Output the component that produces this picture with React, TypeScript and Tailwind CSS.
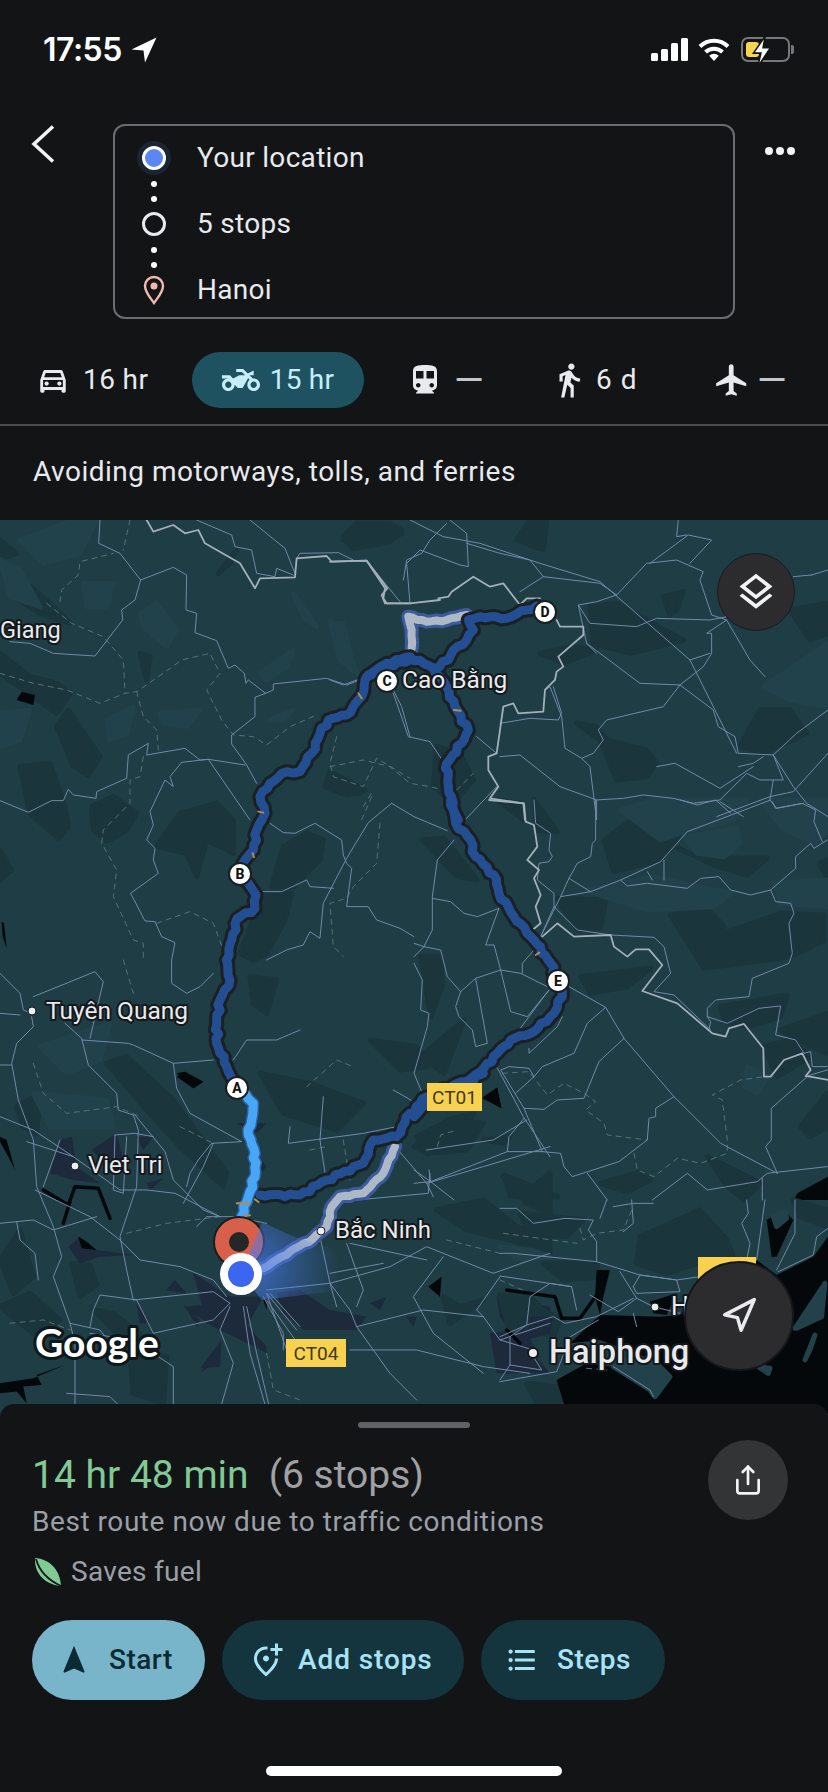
import { Navigation, Share } from "lucide-react";
import {
  MdDirectionsTransit,
  MdDirectionsWalk,
  MdFlight,
  MdFormatListBulleted,
  MdNavigation,
  MdOutlineAddLocationAlt,
  MdOutlineDirectionsCar,
  MdOutlineLayers,
  MdOutlineTwoWheeler,
} from "react-icons/md";

// traced pieces of the map; every layer is in the px of a 3x crop starting at `at`
interface MapLayer {
  at: [number, number];
  light?: string[];
  dark?: string[];
  navy?: string[];
  black?: string[];
  rivers?: string[];
  roads?: string[];
  dashes?: string[];
  borders?: string[];
}

const layers: MapLayer[] = [
  {
    at: [0, 520],
    light: [
      "60,60 220,0 290,0 240,100 130,130",
      "250,190 340,190 320,260 260,260",
      "420,280 470,250 530,330 500,380 430,320",
      "780,460 880,390 860,440 800,480",
      "880,220 950,320 910,290",
      "990,310 1030,310 1060,440 1010,380",
      "0,580 90,570 60,660 0,680",
      "320,600 400,560 380,640 330,660",
      "480,580 600,570 560,620 490,610",
      "810,600 880,570 850,600",
      "0,120 60,150 120,260 30,230",
    ],
    dark: [
      "170,620 205,570 300,710 265,765 220,740",
      "60,740 150,730 195,860 205,920 175,955 90,880",
      "275,860 340,830 410,880 380,930 320,965 280,930",
      "815,1100 850,980 920,940 970,960 960,1020 880,1100",
      "720,1300 790,1120 875,1120 855,1200 800,1300 760,1320",
      "975,800 990,755 1095,810 1040,825",
      "1030,60 1060,25 1160,10 1205,30 1170,65 1080,80",
      "470,980 540,880 650,850 700,900 700,1000 620,960 590,1070 560,1000",
      "30,170 80,190 150,250 210,310 120,280 40,230",
      "0,60 50,100 20,110 0,100",
      "0,400 90,470 170,490 210,520 170,580 100,530 0,460",
      "655,160 710,90 690,130",
      "420,400 450,410 440,480",
      "0,990 35,1050 0,1080",
    ],
    black: ["50,540 65,515 105,525 100,555", "5,1205 12,1210 20,1285 8,1250"],
    roads: [
      "300,0 296,70 360,100 422,180 520,142 560,165 558,270 590,280 585,338 650,362 685,445 705,435 733,460 738,490 745,480 797,520 820,510 820,492 980,475 1040,495 1080,480",
      "422,180 405,240 365,270 368,300 285,408 160,400 90,370 30,365",
      "797,520 765,532 765,590 695,645 695,672 740,735 770,790",
      "0,842 85,877 155,842 190,842 205,808 220,825 288,835 290,815 380,775 385,705 445,670 440,705 555,685 600,720 625,718 735,735",
      "625,718 545,727 510,770 520,800 495,780 450,875 460,915 440,960 465,985 460,1020 475,1060 392,1120 435,1203 465,1205 485,1250 525,1268 515,1320",
      "625,718 750,900",
      "810,910 850,938 885,940 945,910 1025,960 1030,1005 1040,1030 1055,1045 1040,1160 1105,1160 1130,1200 1200,1225 1242,1250",
      "1175,850 1105,908 1040,1015 970,1150 960,1255 930,1235 910,1275 860,1290 800,1320",
      "790,1115 845,1115 920,1080 930,1100 1000,1105",
      "1180,510 1205,560 1230,650",
      "1175,850 1242,890",
      "590,0 695,45 705,80 755,90 770,160 825,170 830,145 880,165",
      "750,0 855,85 885,160",
      "890,115 900,100 1015,98 1060,120",
      "1100,122 1200,245",
    ],
    dashes: [
      "180,245 185,210 235,165 240,125 340,100",
      "390,0 370,90",
      "0,460 100,490 200,510 300,550 375,520 410,515 490,460 545,420 630,400 660,460 620,510 665,600 700,645 760,650 800,675 870,620 950,585",
      "140,250 215,310 310,350 370,420 375,520",
      "410,515 430,590 470,630 475,690",
      "430,710 420,770 390,780 390,850 310,930 305,970 350,1050 340,1130 400,1260 430,1270 430,1320",
      "470,1210 570,1175 640,1210 670,1290",
      "1010,650 990,730 1000,770 1090,800 1130,715 1230,775",
      "1115,830 1085,900",
      "1140,910 1130,1030 1060,1100 1040,1135 990,1150 1000,1280 1030,1310",
    ],
    borders: [
      "440,0 460,35 520,15 555,40 595,30 615,70 720,130 765,205 780,175 885,172 890,115 980,108 995,125 1100,122 1162,205 1145,225 1155,250 1232,250",
    ],
  },
  {
    at: [330, 520],
    light: ["0,300 40,340 80,460 30,420", "1300,500 1494,370 1494,560 1380,540"],
    dark: [
      "40,50 80,10 180,10 215,40 160,70 70,85",
      "560,60 600,0 650,0 640,90",
      "630,400 720,380 800,390 700,430",
      "740,610 800,620 830,660 950,690 980,730 950,770 860,780 810,660",
      "780,260 860,250 1060,360 900,400 790,370",
      "1000,230 1060,215 1040,270 1020,285",
      "1230,680 1290,570 1380,570 1430,640 1300,700",
      "1380,270 1494,250 1494,340 1440,360",
      "320,680 390,700 430,780 370,850 310,800",
      "0,770 60,790 90,820 30,820",
      "950,870 1000,840 1050,900 950,900",
    ],
    roads: [
      "240,0 340,50 450,70 630,130 810,185 1080,420 1220,700",
      "360,0 410,40 415,140 390,135 270,90 230,130 240,250",
      "350,10 300,60 275,100 230,120 220,180",
      "410,70 510,100 600,120 640,170 570,215",
      "640,170 810,190 860,225 950,130 1040,120 1120,155 1110,180 1145,285 1190,300 1260,420 1305,470",
      "960,130 1075,45 1145,60 1080,130",
      "1045,0 1040,50 1070,45",
      "860,225 800,245 745,255 780,310 920,320 980,295 1140,300 1190,290",
      "745,255 760,325 770,370 930,490 1050,495 1120,440 1145,400 1145,340 1130,340 1190,300",
      "770,370 800,400",
      "1050,495 1000,560 830,600 805,630 820,660 790,700 755,715 705,685 695,590 660,500 645,510",
      "1050,495 1150,570 1165,620 1215,650 1225,700 1330,705 1390,800 1430,850 1494,890",
      "1080,420 1140,400",
      "1300,710 1270,730 1225,740",
      "1330,705 1360,780 1290,780 1250,760 1170,840 1090,850 1030,835 940,825 880,835 800,840 690,800 570,705 510,710",
      "1494,570 1400,640 1330,705",
      "1494,700 1390,815 1320,830 1160,890",
      "800,840 800,900 780,740 755,715",
      "980,740 1035,730 1170,805 1270,740",
      "1170,845 1240,890",
      "1330,780 1320,840 1340,865 1420,850",
      "670,500 695,580 685,600 600,595 510,610",
      "1445,165 1494,150",
      "1390,170 1445,165",
      "440,650 500,700",
      "190,520 235,650 300,665 340,725",
      "0,480 40,495 80,480",
      "405,900 500,800",
    ],
    dashes: [
      "0,740 100,720 180,740 240,790 300,800 340,810",
      "100,860 130,810",
      "380,810 430,760",
    ],
    borders: [
      "0,125 110,122 165,205 160,235 170,250 240,250 330,240 325,235 355,230 365,215 430,170 480,200 520,190 570,255 590,235 630,235",
      "680,300 690,320 760,320 760,345 685,410 700,440 680,455 675,480 645,510 640,575 565,580 550,550 520,560 500,700 475,710 475,750 505,800 480,835 580,850 585,900",
    ],
  },
  {
    at: [414, 800],
    light: [
      "620,30 720,0 1000,0 960,60 810,95 740,120",
      "810,110 970,85 980,130 930,170 850,160",
      "1040,0 1242,0 1242,90 1200,130 1100,80",
      "520,270 720,230 950,280 900,320 700,330 570,290",
      "1080,250 1240,240 1240,320 1100,310",
      "1000,800 1060,830 1030,880 990,860",
    ],
    dark: [
      "570,120 720,10 800,70 800,100 740,180 600,215",
      "770,345 880,325 930,380 900,410 1100,340 1230,345 1230,420 1130,470 870,505",
      "500,530 710,505 640,560 530,580",
      "760,130 860,175 1060,175 1000,225 900,195",
      "430,295 575,300 560,385 490,390",
      "920,620 1120,585 1100,650 1000,680 930,665",
      "1050,740 1130,720 1190,770 1090,830",
      "25,120 90,115 190,240 130,230",
      "20,470 80,470 85,560 50,650",
      "20,770 150,660 90,820",
      "0,1040 100,960 180,940 110,1040 40,1060",
      "270,1125 430,1190 290,1190",
      "880,1070 1040,1150 990,1200 940,1160",
      "560,1150 680,1115 710,1140 640,1175",
      "1215,190 1242,180 1242,240",
      "1100,690 1242,640 1242,760 1190,740",
      "1160,980 1240,880 1242,980 1190,1010",
      "360,0 430,95 370,90",
      "250,0 320,10 330,60",
    ],
    navy: ["205,1020 280,1005 255,1035"],
    black: ["205,895 250,862 262,925", "1140,1200 1150,1180 1242,1130 1242,1200"],
    roads: [
      "0,50 100,92",
      "120,120 70,180 55,290 55,390 30,440 80,450 100,530 140,575 185,535 260,510 320,520 400,560",
      "55,295 110,305 150,340 190,350 255,325 215,435 240,435 260,510 290,635 340,650 405,570",
      "185,535 220,730 185,740 175,690 135,650 125,620 140,575",
      "315,690 405,570",
      "465,560 575,622 630,715 780,890 920,1030 1090,1120",
      "575,622 520,670 480,760 385,800 360,830 305,880",
      "630,715 555,785 510,895 430,900 390,928 330,925 260,810 285,800 345,805 360,830",
      "330,925 385,1055 280,1055 50,1145 0,1110",
      "385,1055 440,1060 450,1100 475,1130 615,1085 700,1020 705,955 725,950 725,925 780,890",
      "330,955 285,1010 280,1055",
      "50,1145 0,1150",
      "45,1110 50,1145 120,1200",
      "520,1120 580,1200",
      "715,1200 820,1120 880,1170 1030,1145 1060,1120 1240,1100",
      "1090,1120 1055,1040 1072,1020 1072,925 1180,830",
      "1045,1200 1045,1135",
      "0,430 30,440 0,470",
      "0,490 25,540 20,630 45,640 40,680 0,820 25,880",
      "380,410 440,290 465,235 490,190 530,170 535,130 545,120 545,0",
      "440,290 530,275 620,240 740,185 820,95 1070,0",
      "465,235 530,275",
      "360,0 365,70 410,100 405,150 415,170 405,185 375,190 370,240 420,280 420,320 490,390 590,405",
      "420,320 380,410",
      "620,240 640,258 700,250 820,265 860,235 915,230 950,270 1010,285 1070,270 1145,205 1145,170 1190,130 1200,145 1240,120",
      "700,215 715,240",
      "750,180 750,240",
      "1070,270 1085,305 1130,310 1140,340 1125,370 1135,460 1125,490 1015,535 1005,590 905,600 880,625 880,650 890,665 885,690",
      "880,650 940,670 1035,625 1100,618 1085,705 1145,720 1170,760 1190,755 1195,800 1240,800",
      "590,405 720,412 750,440 770,520 720,575 780,585 890,690",
      "1075,5 1085,25 1165,10 1205,30 1200,65 1225,125",
      "800,0 850,15 905,0 950,40",
      "1180,828 1240,810",
      "325,520 325,490 360,450",
      "345,745 345,760 430,680 445,650",
    ],
    dashes: [
      "265,820 345,815 400,885 450,850 510,880 545,905 515,930 570,970 580,1005 700,1020",
      "660,1060 670,1110 720,1130 790,1075 860,1090 940,1060 940,1020 925,900 895,885 980,840 1050,830",
      "70,1040 80,1005 130,990",
    ],
    borders: [
      "225,0 330,10 335,65 360,75 370,140 340,180 375,210 360,235 380,285 365,320 380,370 358,388",
      "385,410 430,370 480,410 590,405 600,440 640,470 665,448 705,448 745,495 685,573 790,610 895,700 935,710 945,685 990,672 1048,745 1050,830 1070,830 1110,780 1165,760 1190,810 1175,828 1242,840",
    ],
  },
  {
    at: [0, 960],
    light: ["120,260 330,190 300,300 200,340", "100,400 320,420 340,500 150,500"],
    dark: [
      "320,310 380,290 520,420 680,640 670,680 540,560 440,450",
      "215,910 270,915 290,975 240,1010",
      "0,1040 90,1000 180,1080 100,1120",
      "390,1180 500,1190 490,1330 400,1300",
      "280,1050 340,1060 430,1130 350,1120",
      "750,50 830,60 800,160 760,130",
      "0,900 60,810 100,950 40,1000",
      "50,440 120,400 110,520 70,500",
    ],
    navy: [
      "150,640 180,540 215,530 230,620 300,670 220,660",
      "275,570 350,520 370,600 310,610",
      "410,530 460,530 430,570",
      "205,860 240,830 290,870 400,885 300,890 240,910",
      "440,670 490,655 450,690",
      "710,490 800,490 770,520",
      "770,580 800,620 780,640",
      "410,1030 450,1090 420,1090",
      "500,990 525,960 560,1000",
      "550,1030 600,1080 590,1100",
      "600,1240 650,1170 640,1210",
      "580,940 680,1010 790,1010 740,1100 800,1170 800,1180 680,1100 620,1090",
    ],
    black: [
      "530,340 555,335 610,365 580,385",
      "0,1270 100,1255 200,1213 110,1245 125,1275 70,1280 80,1330 50,1295 0,1300",
      "0,530 20,540 45,630 25,590 0,545",
      "235,830 260,845 290,870 245,865",
    ],
    rivers: ["130,690 205,735 225,680 295,685 330,775", "210,725 190,790"],
    roads: [
      "0,40 60,100 70,150 95,160",
      "100,110 285,35 310,65 270,235",
      "195,190 245,235 265,315 350,400 355,450 400,465 415,510 410,680 360,830 380,930 400,1020",
      "245,240 385,250 400,255 520,310 530,385 570,460 725,545",
      "520,310 640,300",
      "95,170 100,200 50,250 35,310 55,420 100,540 110,680 160,800 185,890 160,950 210,1090 225,1150 225,1350",
      "0,160 60,165",
      "0,315 35,315",
      "0,470 100,510 220,590 360,690 440,690 525,700 660,770",
      "80,545 220,590",
      "180,540 130,680",
      "105,690 270,770 360,840 420,900 540,920 640,960 680,1010",
      "345,525 340,690 370,700 380,530",
      "345,525 405,520 460,530",
      "405,465 495,575 520,660 610,750 660,770",
      "595,600 635,550 725,545",
      "560,680 570,640 595,600",
      "0,790 50,785 100,780 160,810 290,770",
      "50,785 60,840 105,880 115,960",
      "400,1020 640,995 690,1030",
      "690,1030 640,1080 460,1120 410,1020 300,1005 280,1050 270,1100",
      "730,1040 750,1180 800,1350",
      "740,1040 770,1180 810,1350",
      "690,1040 660,1110 700,1210 660,1350",
      "210,1090 300,1110 330,1150 430,1160 520,1220 520,1350",
      "270,1120 330,1130",
      "200,1300 330,1310 370,1350",
      "515,0 515,70 560,100 600,80 640,40",
      "700,300 740,240 830,240 900,210",
      "590,800 620,770 700,770 800,790",
      "550,730 610,620 640,550",
      "790,1010 850,1120 850,1170",
      "800,1020 900,1160",
      "810,1000 900,1100",
    ],
    dashes: [
      "100,310 130,400 200,460 350,440 420,470",
      "380,820 500,790 660,770",
      "30,1090 130,1080 210,1110",
      "370,0 400,100",
      "540,500 640,550",
      "800,1180 820,1290 900,1320",
    ],
  },
  {
    at: [150, 1040],
    dark: [
      "860,510 1000,480 1100,560 1200,590 1200,640 1080,600 950,570",
      "1060,410 1150,440 1200,400 1200,520 1130,490",
      "800,290 900,240 1000,250 950,330 830,340",
      "660,0 800,20 830,80 750,90",
      "330,100 480,130 640,190 560,270 400,220",
      "1000,300 1080,290 1060,310",
      "880,770 930,800 1000,780 900,850",
    ],
    navy: [
      "130,700 240,770 210,800 170,770",
      "100,800 230,790 350,920 345,935 190,860",
      "380,760 450,750 540,810 650,830 620,870 460,870 400,820",
      "230,770 340,770 310,800 260,805",
      "50,750 75,725 105,760",
      "150,985 215,900 210,980",
      "660,790 710,770 690,810",
      "1040,770 1200,800 1200,850 1100,900 1050,830",
      "1020,880 1090,870 1200,1000 1040,1000",
      "770,830 800,830 790,860",
    ],
    black: [
      "1000,170 1040,145 1055,205",
      "835,740 875,710 870,770",
      "80,110 100,95 160,125 130,145",
      "340,780 350,775 350,810",
    ],
    roads: [
      "350,750 540,730 720,680 830,620 1030,700 1200,640",
      "540,730 600,810 620,860 740,830 820,810 1000,830 1050,900 1150,930",
      "840,400 835,460 620,480 545,490",
      "510,590 540,730 560,800",
      "830,430 1000,380 1200,320",
      "350,760 410,930",
      "350,760 440,870",
      "600,930 800,930 1000,980 1140,1000",
      "1050,710 980,810 1000,830",
      "1050,900 1200,850",
      "620,860 720,1000 800,1080",
      "880,650 790,770 850,880 1000,1000",
      "740,325 830,430 850,470",
      "420,260 415,310 640,280 740,260",
      "520,170 510,300 530,430",
      "730,150 800,190 1000,120",
      "1040,80 1120,230 1200,350",
      "1130,240 1030,300 830,330",
      "600,610 830,660",
      "700,670 540,700",
      "590,610 640,750 620,800",
    ],
    dashes: [
      "470,140 560,60 610,80",
      "480,330 530,320",
      "1050,720 1140,760 1200,770",
      "580,300 600,420",
      "890,600 1050,640",
    ],
  },
  {
    at: [500, 1200],
    dark: [
      "420,110 600,30 680,120 700,170 590,190 500,220 410,190",
      "0,285 90,290 130,330 180,360 160,410 80,380 30,400",
      "60,40 250,60 200,110 90,100",
      "130,190 290,190 300,230 190,240",
      "880,0 984,30 984,80 900,50",
      "80,550 170,560 180,610 110,610",
    ],
    navy: ["90,350 160,350 150,400 80,420", "10,420 70,380 120,470 60,500"],
    black: [
      "300,345 480,350 540,345 560,320 600,225 770,180 830,225 940,170 984,110 984,640 200,640 170,540 260,490 340,500 450,570 465,590 510,530 460,480 300,420 210,430",
      "290,210 330,210 310,290 300,345 285,290",
      "450,305 530,280 500,345 460,340",
      "800,60 850,30 880,60 830,170 815,170",
    ],
    light: [
      "340,500 450,570 465,590 510,530 470,490 400,470",
      "885,385 975,250 965,350 890,385",
      "915,480 945,405 930,450",
      "775,500 810,505 805,520",
      "820,50 855,35 860,55 830,80",
      "0,140 90,150 150,170 60,180",
    ],
    rivers: ["20,270 165,290 185,355 240,355 290,285", "20,390 60,430"],
    roads: [
      "0,25 50,25 100,70 195,55 280,60 265,90 290,125 290,185 420,225 530,240 600,230",
      "0,160 40,160 290,185",
      "0,228 215,260 230,330",
      "270,285 355,335 410,295 360,215",
      "400,260 420,225 530,240 540,275 410,280 400,260",
      "410,295 460,320 540,340",
      "0,410 80,375 160,350 195,370 290,350 400,295",
      "195,420 295,360",
      "0,540 30,495 30,410 80,375 90,290 150,250 215,260",
      "30,495 125,510 100,470",
      "0,545 170,515 200,440",
      "740,0 745,40 725,70 750,130 740,180",
      "795,0 770,180",
      "885,0 885,100 830,210",
      "835,215 940,165 950,110 984,85",
      "320,0 300,55",
      "395,0 400,70 370,95",
      "340,20 400,10 460,10",
      "340,500 450,570 460,590",
      "400,340 410,380",
    ],
    dashes: [
      "10,100 230,130",
      "240,85 250,120 290,100 370,90 400,20",
      "260,505 320,510",
    ],
  },
];

// route, in the same crop coordinates
const darkRoute: [number, number, string][] = [
  [150, 1040, "330,465 450,465 530,420 640,370 670,300 740,290 780,220 830,170 1000,100"],
  [0, 960, "710,383 680,320 650,250 650,180 660,120 690,60 680,0"],
  [0, 520, "680,1320 695,1260 712,1195 765,1165 768,1125 745,1090 720,1065 735,1020 760,990 770,930 795,880 780,830 810,790 860,755 900,755 935,700 960,640 985,600 1040,585 1085,530 1095,480 1105,465 1160,450 1165,440 1230,420"],
  [330, 520, "110,470 170,430 240,410 310,445 355,420 370,390 410,360 430,330 415,300 450,290 530,295 590,270 620,258"],
  [330, 520, "310,445 350,500 375,560 415,630 395,670 350,730 355,800 375,880 385,900"],
  [414, 800, "110,0 125,70 170,120 185,170 240,225 255,280 300,350 360,420 410,490 432,545 445,590 420,640 360,695 290,720 250,760 200,815 150,860 60,890 0,950"],
];

const grayRoute: [number, number, string][] = [
  [150, 1040, "340,685 420,635 490,595 530,560 545,500 570,470 640,460 700,400 735,320"],
  [330, 520, "245,385 245,330 235,290 290,305 350,300 410,285"],
];

const lightRoute = "285,160 310,190 305,240 295,285 315,340 315,410 295,470 275,530";

// the little traffic flecks sitting on the route
const flecks: [number, number, string][] = [
  [0, 520, "1075,520 1085,535"],
  [0, 520, "775,875 790,878"],
  [0, 520, "758,1000 762,1012"],
  [330, 520, "372,570 392,572"],
  [414, 800, "365,465 376,458"],
  [150, 1040, "315,478 326,486"],
  [150, 1040, "280,528 300,526"],
  [150, 1040, "260,490 300,490"],
];

// real route geometry is jagged; break long runs up so the line doesn't look ruled
function roughen(pts: string, amount: number) {
  const nums = pts.split(" ").map((p) => p.split(",").map(Number));
  const out: string[] = [];
  let n = 0;
  nums.forEach(([x, y], i) => {
    out.push(`${x},${y}`);
    const next = nums[i + 1];
    if (!next) return;
    const dx = next[0] - x;
    const dy = next[1] - y;
    const len = Math.hypot(dx, dy);
    const steps = Math.floor(len / 14);
    for (let s = 1; s < steps; s++) {
      n += 1;
      const off = Math.sin(n * 2.3) * Math.cos(n * 0.7) * amount;
      const t = s / steps;
      out.push(`${(x + dx * t - (dy / len) * off).toFixed(1)},${(y + dy * t + (dx / len) * off).toFixed(1)}`);
    }
  });
  return out.join(" ");
}

function Trace({
  at,
  pts,
  stroke,
  width,
  dash,
}: {
  at: [number, number];
  pts: string;
  stroke: string;
  width: number;
  dash?: string;
}) {
  return (
    <polyline
      transform={`translate(${at[0]} ${at[1]}) scale(0.3333)`}
      points={pts}
      fill="none"
      stroke={stroke}
      strokeWidth={width}
      strokeDasharray={dash}
      strokeLinejoin="round"
      strokeLinecap="round"
      vectorEffect="non-scaling-stroke"
    />
  );
}

function Patches({
  at,
  list,
  fill,
  soft,
}: {
  at: [number, number];
  list?: string[];
  fill: string;
  soft?: boolean;
}) {
  return (
    <>
      {list?.map((p) => (
        <polygon
          key={p}
          transform={`translate(${at[0]} ${at[1]}) scale(0.3333)`}
          points={p}
          fill={fill}
          stroke={soft ? fill : "none"}
          strokeWidth={soft ? 5 : 0}
          strokeLinejoin="round"
          vectorEffect="non-scaling-stroke"
        />
      ))}
    </>
  );
}

function Place({
  x,
  y,
  size,
  children,
  weight = 400,
}: {
  x: number;
  y: number;
  size: number;
  children: string;
  weight?: number;
}) {
  return (
    <text
      x={x}
      y={y}
      fontSize={size}
      fontWeight={weight}
      fill="#e8eaed"
      stroke="#14181a"
      strokeWidth={4}
      strokeLinejoin="round"
      className="font-['Roboto',sans-serif] [paint-order:stroke]"
    >
      {children}
    </text>
  );
}

function Stop({ x, y, label }: { x: number; y: number; label: string }) {
  return (
    <g>
      <circle cx={x} cy={y} r={11} fill="#fff" stroke="#1b1f21" strokeWidth={2} />
      <text
        x={x}
        y={y + 5}
        fontSize={14}
        fontWeight={800}
        textAnchor="middle"
        fill="#111"
        className="font-['Roboto',sans-serif]"
      >
        {label}
      </text>
    </g>
  );
}

function Shield({ x, y, w, label }: { x: number; y: number; w: number; label: string }) {
  return (
    <g>
      <rect x={x} y={y} width={w} height={28} fill="#f8d24f" />
      <text
        x={x + w / 2}
        y={y + 21}
        fontSize={19}
        textAnchor="middle"
        fill="#3d3a28"
        className="font-['Roboto',sans-serif]"
      >
        {label}
      </text>
    </g>
  );
}

function MapArt() {
  return (
    <svg viewBox="0 520 828 896" className="block h-[896px] w-[828px]">
      <defs>
        <radialGradient id="beam" gradientUnits="userSpaceOnUse" cx="250" cy="1268" r="90">
          <stop offset="0%" stopColor="#4a7bf0" stopOpacity="0.7" />
          <stop offset="100%" stopColor="#4a7bf0" stopOpacity="0" />
        </radialGradient>
      </defs>
      <rect x="0" y="520" width="828" height="896" fill="#1e3d44" />
      {layers.map((l, i) => (
        <g key={`a${i}`}>
          <Patches at={l.at} list={l.dark} fill="#1a353c" soft />
          <Patches at={l.at} list={l.navy} fill="#1c2a3c" />
          <Patches at={l.at} list={l.black} fill="#05080a" />
          <Patches at={l.at} list={l.light} fill="#21424a" soft />
        </g>
      ))}
      {layers.map((l, i) => (
        <g key={`b${i}`}>
          {l.rivers?.map((p) => (
            <Trace key={p} at={l.at} pts={p} stroke="#05080a" width={3.5} />
          ))}
          {l.dashes?.map((p) => (
            <Trace key={p} at={l.at} pts={p} stroke="#55727b" width={1} dash="5 5" />
          ))}
          {l.roads?.map((p) => (
            <Trace key={p} at={l.at} pts={p} stroke="#7488a8" width={1} />
          ))}
          {l.borders?.map((p) => (
            <Trace key={p} at={l.at} pts={p} stroke="#a3afba" width={1.8} />
          ))}
        </g>
      ))}

      {grayRoute.map(([x, y, p]) => (
        <Trace key={p} at={[x, y]} pts={roughen(p, 3)} stroke="#3c5a9c" width={14} />
      ))}
      {grayRoute.map(([x, y, p]) => (
        <Trace key={p} at={[x, y]} pts={roughen(p, 3)} stroke="#aeb9c8" width={8} />
      ))}
      {darkRoute.map(([x, y, p]) => (
        <Trace key={p} at={[x, y]} pts={roughen(p, 6)} stroke="#1b2023" width={15} />
      ))}
      {darkRoute.map(([x, y, p]) => (
        <Trace key={p} at={[x, y]} pts={roughen(p, 6)} stroke="#234e92" width={9} />
      ))}
      <Trace at={[150, 1040]} pts={roughen(lightRoute, 5)} stroke="#2a5f9a" width={12} />
      <Trace at={[150, 1040]} pts={roughen(lightRoute, 5)} stroke="#48a6f7" width={9} />
      {flecks.map(([x, y, p]) => (
        <Trace key={p} at={[x, y]} pts={p} stroke="#b58c4e" width={2} />
      ))}

      <Stop x={237} y={1088} label="A" />
      <Stop x={240} y={874} label="B" />
      <Stop x={387} y={681} label="C" />
      <Stop x={545} y={612} label="D" />
      <Stop x={558} y={981} label="E" />

      <Shield x={427} y={1083} w={55} label="CT01" />
      <Shield x={286} y={1339} w={60} label="CT04" />
      <Shield x={698} y={1257} w={58} label="" />

      <Place x={0} y={638} size={23.500}>Giang</Place>
      <Place x={402} y={688} size={24.500}>Cao Bằng</Place>
      <Place x={46} y={1019} size={24.500}>Tuyên Quang</Place>
      <Place x={88} y={1173} size={24}>Viet Tri</Place>
      <Place x={335} y={1238} size={24}>Bắc Ninh</Place>
      <Place x={549} y={1363} size={32.500} weight={500}>Haiphong</Place>
      <Place x={671} y={1315} size={25}>H</Place>
      <circle cx={32} cy={1011} r={4} fill="#eee" stroke="#14181a" />
      <circle cx={75} cy={1166} r={4} fill="#eee" stroke="#14181a" />
      <circle cx={321} cy={1231} r={4} fill="#eee" stroke="#14181a" />
      <circle cx={533} cy={1353} r={5} fill="#eee" stroke="#14181a" strokeWidth={2} />
      <circle cx={655} cy={1307} r={4} fill="#eee" stroke="#14181a" />

      <text
        x={35}
        y={1357}
        fontSize={39}
        fontWeight={700}
        fill="#fff"
        stroke="#10171a"
        strokeWidth={6}
        strokeLinejoin="round"
        className="font-['Lato',sans-serif] [paint-order:stroke]"
      >
        Google
      </text>

      <circle cx={239} cy={1242} r={25} fill="#d8604a" stroke="#1a1d1f" strokeWidth={2} />
      <circle cx={239} cy={1242} r={10} fill="#252628" />
      <path d="M241 1274 L262 1222 L290 1235 L350 1255 L345 1290 L262 1300 Z" fill="url(#beam)" />
      <circle cx={241} cy={1274} r={21} fill="#fff" />
      <circle cx={241} cy={1274} r={13} fill="#3a66f0" />
    </svg>
  );
}

function Reception() {
  return (
    <div className="flex items-center gap-[10px]">
      <div className="flex h-[23px] items-end gap-[3px]">
        <div className="h-[8px] w-[7px] rounded-[1.5px] bg-white" />
        <div className="h-[12px] w-[7px] rounded-[1.5px] bg-white" />
        <div className="h-[18px] w-[7px] rounded-[1.5px] bg-white" />
        <div className="h-[23px] w-[7px] rounded-[1.5px] bg-white" />
      </div>
      <svg width="32" height="24" viewBox="0 0 32 24" fill="none">
        <path d="M2 8.5a20 20 0 0 1 28 0" stroke="#fff" strokeWidth="4" />
        <path d="M7.5 14a12.4 12.4 0 0 1 17 0" stroke="#fff" strokeWidth="4" />
        <path d="M16 23l-4.8-5.3a7 7 0 0 1 9.6 0z" fill="#fff" />
      </svg>
      <div className="relative ml-[1px] h-[25px] w-[49px] rounded-[7px] border-2 border-[#77787b] p-[3px]">
        <div className="h-full w-[13px] rounded-[3px] bg-[#f8d54a]" />
        <svg className="absolute left-[7px] top-[-4px]" width="24" height="33" viewBox="0 0 22 31">
          <path d="M14 1 3 17h7l-3 13L19 12h-7z" fill="#fff" stroke="#131416" strokeWidth="1.5" />
        </svg>
        <div className="absolute right-[-6px] top-[6px] h-[9px] w-[3px] rounded-r-[2px] bg-[#77787b]" />
      </div>
    </div>
  );
}

function Mode({ icon, children, className }: { icon: React.ReactNode; children: React.ReactNode; className: string }) {
  return (
    <div className={`flex items-center text-[28px] text-[#e8eaed] ${className}`}>
      {icon}
      {children}
    </div>
  );
}

export default function App() {
  return (
    <div className="flex h-[1792px] w-[828px] flex-col overflow-hidden bg-[#131416] font-['Roboto',sans-serif]">
      <div className="flex h-[124px] items-start justify-between pl-[43px] pr-[38px] pt-[32px]">
        <div className="flex items-center gap-[9px] font-['Inter',sans-serif] text-[32px] font-semibold leading-[36px] tracking-[-0.5px] text-white">
          17:55
          <svg width="26" height="26" viewBox="0 0 26 26">
            <path d="M25.500 0.500 0.500 12.500l12 1 1.500 12z" fill="#fff" />
          </svg>
        </div>
        <div className="pt-[5px]">
          <Reception />
        </div>
      </div>

      <div className="flex h-[195px] items-start">
        <button className="ml-[31px] mt-[1px] w-[82px] text-left">
          <svg width="24" height="38" viewBox="0 0 24 38" fill="none">
            <path d="M22 1.500 3 19l19 17.500" stroke="#f1f3f4" strokeWidth="3.5" />
          </svg>
        </button>
        <div className="flex h-[195px] w-[622px] flex-col rounded-[12px] border-2 border-[#6b6c6f] pl-[22px] pt-[12px]">
          <div className="flex h-[40px] items-center">
            <div className="flex w-[60px] justify-start">
              <div className="flex size-[34px] items-center justify-center rounded-full bg-[#1b2433]">
                <div className="size-[24px] rounded-full border-[3px] border-white bg-[#5a87f2]" />
              </div>
            </div>
            <span className="text-[28px] tracking-[0.3px] text-[#e8eaed]">Your location</span>
          </div>
          <div className="flex h-[26px] w-[34px] flex-col items-center justify-center gap-[9px]">
            <div className="size-[6px] rounded-full bg-white" />
            <div className="size-[6px] rounded-full bg-white" />
          </div>
          <div className="flex h-[40px] items-center">
            <div className="w-[60px]">
              <div className="ml-[5px] size-[24px] rounded-full border-[3px] border-[#e8eaed]" />
            </div>
            <span className="text-[28px] tracking-[0.3px] text-[#e8eaed]">5 stops</span>
          </div>
          <div className="flex h-[26px] w-[34px] flex-col items-center justify-center gap-[9px]">
            <div className="size-[6px] rounded-full bg-white" />
            <div className="size-[6px] rounded-full bg-white" />
          </div>
          <div className="flex h-[40px] items-center">
            <div className="w-[60px]">
              <svg className="ml-[6px]" width="22" height="30" viewBox="0 0 22 30" fill="none">
                <path
                  d="M11 28C6 21 2 17 2 11a9 9 0 0 1 18 0c0 6-4 10-9 17z"
                  stroke="#f0b8ae"
                  strokeWidth="2.4"
                />
                <circle cx="11" cy="11" r="3.500" fill="#f0b8ae" />
              </svg>
            </div>
            <span className="text-[28px] tracking-[0.3px] text-[#e8eaed]">Hanoi</span>
          </div>
        </div>
        <div className="ml-[30px] mt-[23px] flex gap-[3px]">
          <div className="size-[8px] rounded-full bg-[#f1f3f4]" />
          <div className="size-[8px] rounded-full bg-[#f1f3f4]" />
          <div className="size-[8px] rounded-full bg-[#f1f3f4]" />
        </div>
      </div>

      <div className="mt-[33px] flex h-[56px] items-center">
        <Mode className="ml-[36px] w-[156px] gap-[13px]" icon={<MdOutlineDirectionsCar size={34} />}>
          <span className="tracking-[0.4px]">16 hr</span>
        </Mode>
        <div className="flex h-[56px] w-[172px] items-center justify-center gap-[10px] rounded-full bg-[#1f5260] text-[28px] tracking-[0.2px] text-[#c6eefa]">
          <MdOutlineTwoWheeler size={38} />
          <span>15 hr</span>
        </div>
        <Mode className="ml-[43px] w-[141px] gap-[11px]" icon={<MdDirectionsTransit size={36} />}>
          <span className="text-[38px] leading-none text-[#c4c6c9]">—</span>
        </Mode>
        <Mode className="ml-[2px] w-[163px] gap-[8px]" icon={<MdDirectionsWalk size={38} />}>
          <span className="tracking-[1px]">6 d</span>
        </Mode>
        <Mode className="gap-[6px]" icon={<MdFlight size={38} />}>
          <span className="text-[38px] leading-none text-[#c4c6c9]">—</span>
        </Mode>
      </div>

      <div className="mt-[16px] h-[2px] bg-[#4b4c4e]" />
      <div className="flex h-[94px] items-start pl-[33px] pt-[29px] text-[28px] leading-[34px] tracking-[0.5px] text-[#e8eaed]">
        Avoiding motorways, tolls, and ferries
      </div>

      <div className="relative h-[884px] shrink-0">
        <MapArt />
        <button className="absolute left-[717px] top-[33px] flex size-[78px] items-center justify-center rounded-full border border-[#1b1c1e] bg-[#2c2b2d] text-[#f1f3f4]">
          <MdOutlineLayers size={44} />
        </button>
        <button className="absolute left-[684px] top-[741px] flex size-[110px] items-center justify-center rounded-full border-2 border-[#15171a] bg-[#2c2b2d] text-[#e8eaed]">
          <Navigation size={38} strokeWidth={2.2} className="-rotate-[2deg]" />
        </button>
      </div>

      <div className="relative flex grow flex-col rounded-t-[14px] bg-[#131416] px-[32px]">
        <div className="mx-auto mt-[18px] h-[6px] w-[112px] rounded-full bg-[#5f6164]" />
        <div className="mt-[24px] flex items-center gap-[20px] text-[39px] leading-[46px]">
          <span className="text-[#81c995]">14 hr 48 min</span>
          <span className="text-[#a0a1a4]">(6 stops)</span>
        </div>
        <div className="mt-[6px] text-[28px] leading-[36px] tracking-[0.55px] text-[#9aa0a6]">
          Best route now due to traffic conditions
        </div>
        <div className="mt-[14px] flex items-center gap-[9px] text-[28px] leading-[36px] tracking-[0.3px] text-[#9aa0a6]">
          <svg width="30" height="30" viewBox="0 0 30 30">
            <path d="M3 1c14 1 25 11 26 28C15 28 2 18 3 1z" fill="#81c995" />
            <path d="M4 2c3 11 12 21 25 27" stroke="#131416" strokeWidth="1.800" fill="none" />
          </svg>
          <span>Saves fuel</span>
        </div>
        <div className="mt-[30px] flex gap-[17px]">
          <button className="flex h-[80px] w-[173px] items-center gap-[18px] rounded-[40px] bg-[#78b5cb] pl-[26px] text-[28px] font-medium tracking-[0.5px] text-[#0d2a33]">
            <MdNavigation size={34} className="-ml-[1px]" />
            <span>Start</span>
          </button>
          <button className="flex h-[80px] w-[242px] items-center gap-[14px] rounded-[40px] bg-[#14343e] pl-[26px] text-[28px] font-medium tracking-[0.9px] text-[#a8e3f5]">
            <MdOutlineAddLocationAlt size={36} />
            <span>Add stops</span>
          </button>
          <button className="flex h-[80px] w-[184px] items-center gap-[18px] rounded-[40px] bg-[#14343e] pl-[24px] text-[28px] font-medium tracking-[0.5px] text-[#a8e3f5]">
            <MdFormatListBulleted size={34} />
            <span>Steps</span>
          </button>
        </div>
        <button className="absolute left-[708px] top-[36px] flex size-[80px] items-center justify-center rounded-full bg-[#333436] text-[#f1f3f4]">
          <Share size={32} strokeWidth={2} />
        </button>
        <div className="absolute left-[266px] top-[362px] h-[10px] w-[296px] rounded-full bg-white" />
      </div>
    </div>
  );
}
